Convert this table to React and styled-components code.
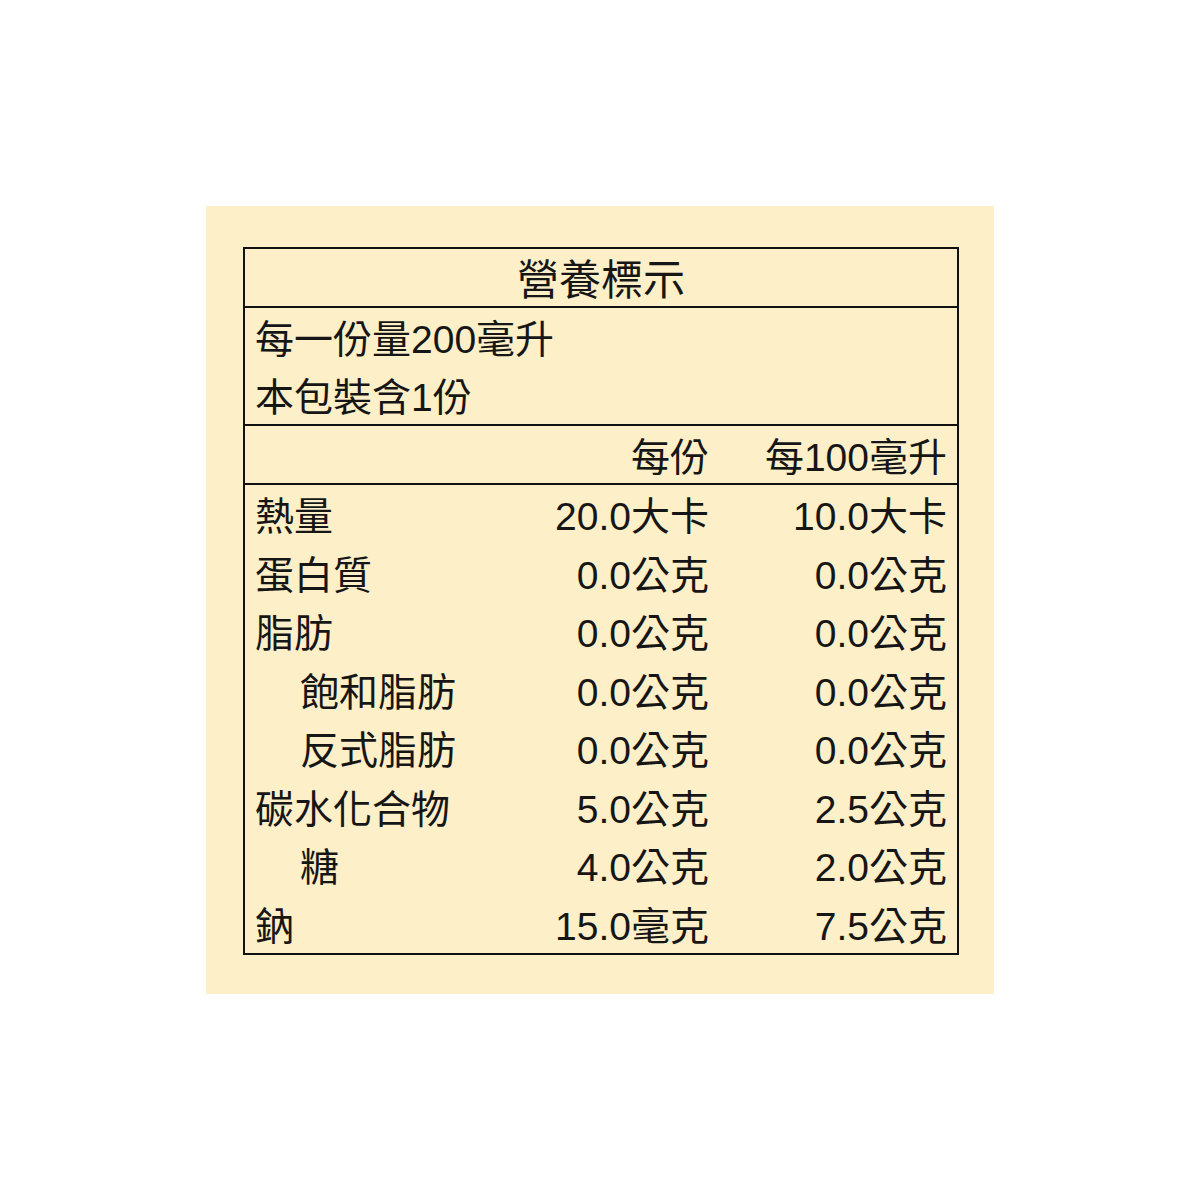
import React from 'react';
import styled, { createGlobalStyle } from 'styled-components';

const GlobalStyle = createGlobalStyle`
    html, body {
        margin: 0;
        padding: 0;
        background: #ffffff;
    }
`;

const Page = styled.div`
    width: 1200px;
    height: 1200px;
    display: flex;
    align-items: center;
    justify-content: center;
`;

const Panel = styled.div`
    width: 788px;
    height: 788px;
    box-sizing: border-box;
    background: #fdefc8;
    padding: 41px 35px 39px 37px;
`;

const Label = styled.div`
    box-sizing: border-box;
    height: 708px;
    border: 2px solid #111;
    font-family: "Liberation Sans", "Noto Sans CJK TC", sans-serif;
    font-size: 39px;
    color: #161616;
    display: flex;
    flex-direction: column;
`;

const Title = styled.div`
    box-sizing: border-box;
    height: 59px;
    padding-top: 4px;
    line-height: 55px;
    text-align: center;
    font-size: 42px;
    border-bottom: 2px solid #111;
`;

const Serving = styled.div`
    padding: 0 10px;
    border-bottom: 2px solid #111;
`;

const Line = styled.div`
    box-sizing: border-box;
    height: 58px;
    padding-top: 6px;
    line-height: 52px;
`;

// one line of the nutrient table: name, per serving, per 100ml
const Row = styled.div`
    box-sizing: border-box;
    display: grid;
    grid-template-columns: 1fr 238px 238px;
    padding: 6px 10px 0;
    height: ${p => p.$h}px;
    line-height: ${p => p.$h - 6 - (p.$ruled ? 2 : 0)}px;
    border-bottom: ${p => (p.$ruled ? '2px solid #111' : 'none')};
`;

const Name = styled.div`
    padding-left: ${p => (p.$sub ? 45 : 0)}px;
    white-space: nowrap;
`;

const Value = styled.div`
    text-align: right;
    white-space: nowrap;
`;

const rows = [
    { name: '熱量', per: '20.0大卡', per100: '10.0大卡' },
    { name: '蛋白質', per: '0.0公克', per100: '0.0公克' },
    { name: '脂肪', per: '0.0公克', per100: '0.0公克' },
    { name: '飽和脂肪', per: '0.0公克', per100: '0.0公克', sub: true },
    { name: '反式脂肪', per: '0.0公克', per100: '0.0公克', sub: true },
    { name: '碳水化合物', per: '5.0公克', per100: '2.5公克' },
    { name: '糖', per: '4.0公克', per100: '2.0公克', sub: true },
    { name: '鈉', per: '15.0毫克', per100: '7.5公克' },
];

export default function App() {
    return (
        <Page>
            <GlobalStyle />
            <Panel>
                <Label>
                    <Title>營養標示</Title>
                    <Serving>
                        <Line>每一份量200毫升</Line>
                        <Line>本包裝含1份</Line>
                    </Serving>
                    <Row $h={59} $ruled>
                        <Name />
                        <Value>每份</Value>
                        <Value>每100毫升</Value>
                    </Row>
                    {rows.map(r => (
                        <Row key={r.name} $h={58.5}>
                            <Name $sub={r.sub}>{r.name}</Name>
                            <Value>{r.per}</Value>
                            <Value>{r.per100}</Value>
                        </Row>
                    ))}
                </Label>
            </Panel>
        </Page>
    );
}
